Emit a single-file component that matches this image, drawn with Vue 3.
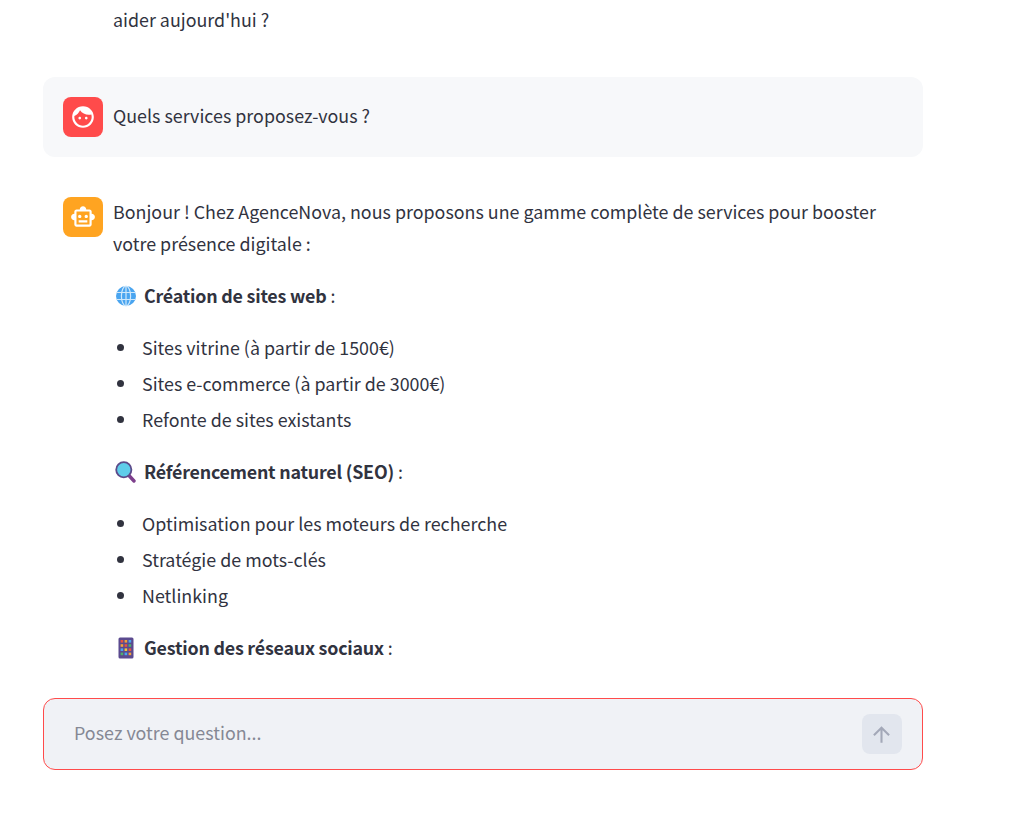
<template>
  <div class="page">
    <div class="chat">
      <div class="message first">
        <div class="spacer"></div>
        <div class="content"><p>aider aujourd'hui ?</p></div>
      </div>

      <div class="message user">
        <div class="avatar red">
          <svg viewBox="0 0 24 24" width="26" height="26" fill="#fff">
            <path d="M9 11.75c-.69 0-1.25.56-1.25 1.25s.56 1.25 1.25 1.25 1.25-.56 1.25-1.25-.56-1.25-1.25-1.25zm6 0c-.69 0-1.25.56-1.25 1.25s.56 1.25 1.25 1.25 1.25-.56 1.25-1.25-.56-1.25-1.25-1.25zM12 2C6.48 2 2 6.48 2 12s4.48 10 10 10 10-4.48 10-10S17.52 2 12 2zm0 18c-4.41 0-8-3.59-8-8 0-.29.02-.58.05-.86 2.36-1.05 4.23-2.98 5.21-5.37C11.07 8.33 14.05 10 17.42 10c.78 0 1.53-.09 2.25-.26.21.71.33 1.47.33 2.26 0 4.41-3.59 8-8 8z" />
          </svg>
        </div>
        <div class="content"><p>Quels services proposez-vous ?</p></div>
      </div>

      <div class="message">
        <div class="avatar orange">
          <svg viewBox="0 0 24 24" width="26" height="26" fill="#fff">
            <path d="M20 9V7c0-1.1-.9-2-2-2h-3c0-1.66-1.34-3-3-3S9 3.34 9 5H6c-1.1 0-2 .9-2 2v2c-1.66 0-3 1.34-3 3s1.34 3 3 3v4c0 1.1.9 2 2 2h12c1.1 0 2-.9 2-2v-4c1.66 0 3-1.34 3-3s-1.34-3-3-3zm-2 10H6V7h12v12zm-9-6c-.83 0-1.5-.67-1.5-1.5S8.17 10 9 10s1.5.67 1.5 1.5S9.83 13 9 13zm7.5-1.5c0 .83-.67 1.5-1.5 1.5s-1.5-.67-1.5-1.5.67-1.5 1.5-1.5 1.5.67 1.5 1.5zM8 15h8v2H8v-2z" />
          </svg>
        </div>
        <div class="content">
          <p>Bonjour ! Chez AgenceNova, nous proposons une gamme complète de services pour booster votre présence digitale :</p>

          <p>
            <svg class="emoji" viewBox="0 0 22 22">
              <circle cx="11" cy="11" r="10" fill="#4aa5f0" />
              <g fill="none" stroke="#cfe8fb" stroke-width="1.2">
                <ellipse cx="11" cy="11" rx="4.6" ry="10" />
                <path d="M11 1v20M1.6 7.5h18.8M1.6 14.5h18.8" />
              </g>
            </svg>
            <strong>Création de sites web</strong> :
          </p>
          <ul>
            <li v-for="item in webItems" :key="item">{{ item }}</li>
          </ul>

          <p>
            <svg class="emoji" viewBox="0 0 22 22">
              <path d="M13.5 14l5.5 6" stroke="#7d3f8c" stroke-width="3.4" stroke-linecap="round" />
              <circle cx="8.8" cy="8.8" r="7.6" fill="#5fcdea" stroke="#5c4a8a" stroke-width="1.8" />
            </svg>
            <strong>Référencement naturel (SEO)</strong> :
          </p>
          <ul>
            <li v-for="item in seoItems" :key="item">{{ item }}</li>
          </ul>

          <p>
            <svg class="emoji" viewBox="0 0 22 22">
              <rect x="3.5" y="0.5" width="15" height="21" rx="1.5" fill="#5b4a8f" />
              <rect v-for="cell in phoneCells" :key="cell.x + '-' + cell.y" :x="cell.x" :y="cell.y" width="2.6" height="2.6" :fill="cell.fill" />
            </svg>
            <strong>Gestion des réseaux sociaux</strong> :
          </p>
        </div>
      </div>
    </div>

    <div class="composer">
      <div class="inputBox">
        <input type="text" placeholder="Posez votre question..." />
        <button type="button">
          <svg viewBox="0 0 24 24" width="25" height="25" fill="#a3a8b8">
            <path d="M4 12l1.41 1.41L11 7.83V20h2V7.83l5.58 5.59L20 12l-8-8-8 8z" />
          </svg>
        </button>
      </div>
    </div>
  </div>
</template>

<script setup>
const webItems = [
  "Sites vitrine (à partir de 1500€)",
  "Sites e-commerce (à partir de 3000€)",
  "Refonte de sites existants",
]

const seoItems = [
  "Optimisation pour les moteurs de recherche",
  "Stratégie de mots-clés",
  "Netlinking",
]

// petite grille de couleurs du telephone
const colors = ["#e8543f", "#f2a33a", "#4aa5f0", "#f2a33a", "#e8543f", "#4fb06d", "#4aa5f0", "#f2c83a", "#e8543f", "#4fb06d", "#4aa5f0", "#f2a33a"]
const phoneCells = colors.map((fill, i) => ({
  x: 5.6 + (i % 3) * 4,
  y: 3 + Math.floor(i / 3) * 4.2,
  fill,
}))
</script>

<style>
html,
body {
  background: #fff;
  overflow: hidden;
}
</style>

<style scoped>
.page {
  width: 1014px;
  height: 817px;
  overflow: hidden;
  font-family: "Noto Sans CJK SC", "Noto Sans", sans-serif;
  font-size: 17.88px;
  line-height: 32px;
  color: rgb(49, 51, 63);
}

.chat {
  width: 880px;
  height: 680px;
  margin-left: 43px;
  overflow: hidden;
  display: flex;
  flex-direction: column;
  gap: 20px;
}

.message {
  display: flex;
  gap: 10px;
  padding: 20px;
  flex-shrink: 0;
  border-radius: 12px;
}

.message.first {
  padding-top: 4px;
  padding-bottom: 22px;
}

.message.user {
  background-color: #f7f8fa;
}

.spacer {
  width: 40px;
  flex-shrink: 0;
}

.avatar {
  width: 40px;
  height: 40px;
  flex-shrink: 0;
  border-radius: 8px;
  display: flex;
  align-items: center;
  justify-content: center;
}

.red {
  background-color: #ff4b4b;
}

.orange {
  background-color: #ffa421;
}

.content {
  flex: 1;
  min-width: 0;
  margin-top: -2px;
}

.first .content {
  margin-top: -1px;
}

.content p {
  margin: 0 0 20px;
}

.content p:last-child {
  margin-bottom: 0;
}

.user .content {
  margin-top: 0;
}

.user .content p {
  margin-top: 2px;
}

.content ul {
  margin: 0 0 20px;
  padding-left: 4px;
  list-style: none;
}

.content li {
  display: flex;
  align-items: center;
  gap: 18px;
}

.content li::before {
  content: "";
  width: 7px;
  height: 7px;
  flex-shrink: 0;
  border-radius: 50%;
  background-color: rgb(49, 51, 63);
}

.content li + li {
  margin-top: 4px;
}

.content strong {
  font-weight: 600;
  letter-spacing: -0.22px;
}

.emoji {
  width: 22px;
  height: 22px;
  margin: 0 7px 0 2px;
  vertical-align: -4px;
}

.composer {
  padding: 18px 0 0 43px;
}

.inputBox {
  width: 880px;
  height: 72px;
  box-sizing: border-box;
  display: flex;
  align-items: center;
  padding: 0 20px 0 30px;
  border: 1px solid #ff4b4b;
  border-radius: 12px;
  background-color: #f0f2f6;
}

.inputBox input {
  flex: 1;
  min-width: 0;
  height: 32px;
  margin-bottom: 4px;
  border: none;
  outline: none;
  background: transparent;
  font: inherit;
  color: inherit;
  padding: 0;
}

.inputBox input::placeholder {
  color: #858894;
  opacity: 1;
}

.inputBox button {
  width: 40px;
  height: 40px;
  padding: 0;
  border: none;
  border-radius: 8px;
  background-color: #e2e6ee;
  display: flex;
  align-items: center;
  justify-content: center;
}

.inputBox button svg {
  margin-left: -1px;
}
</style>
